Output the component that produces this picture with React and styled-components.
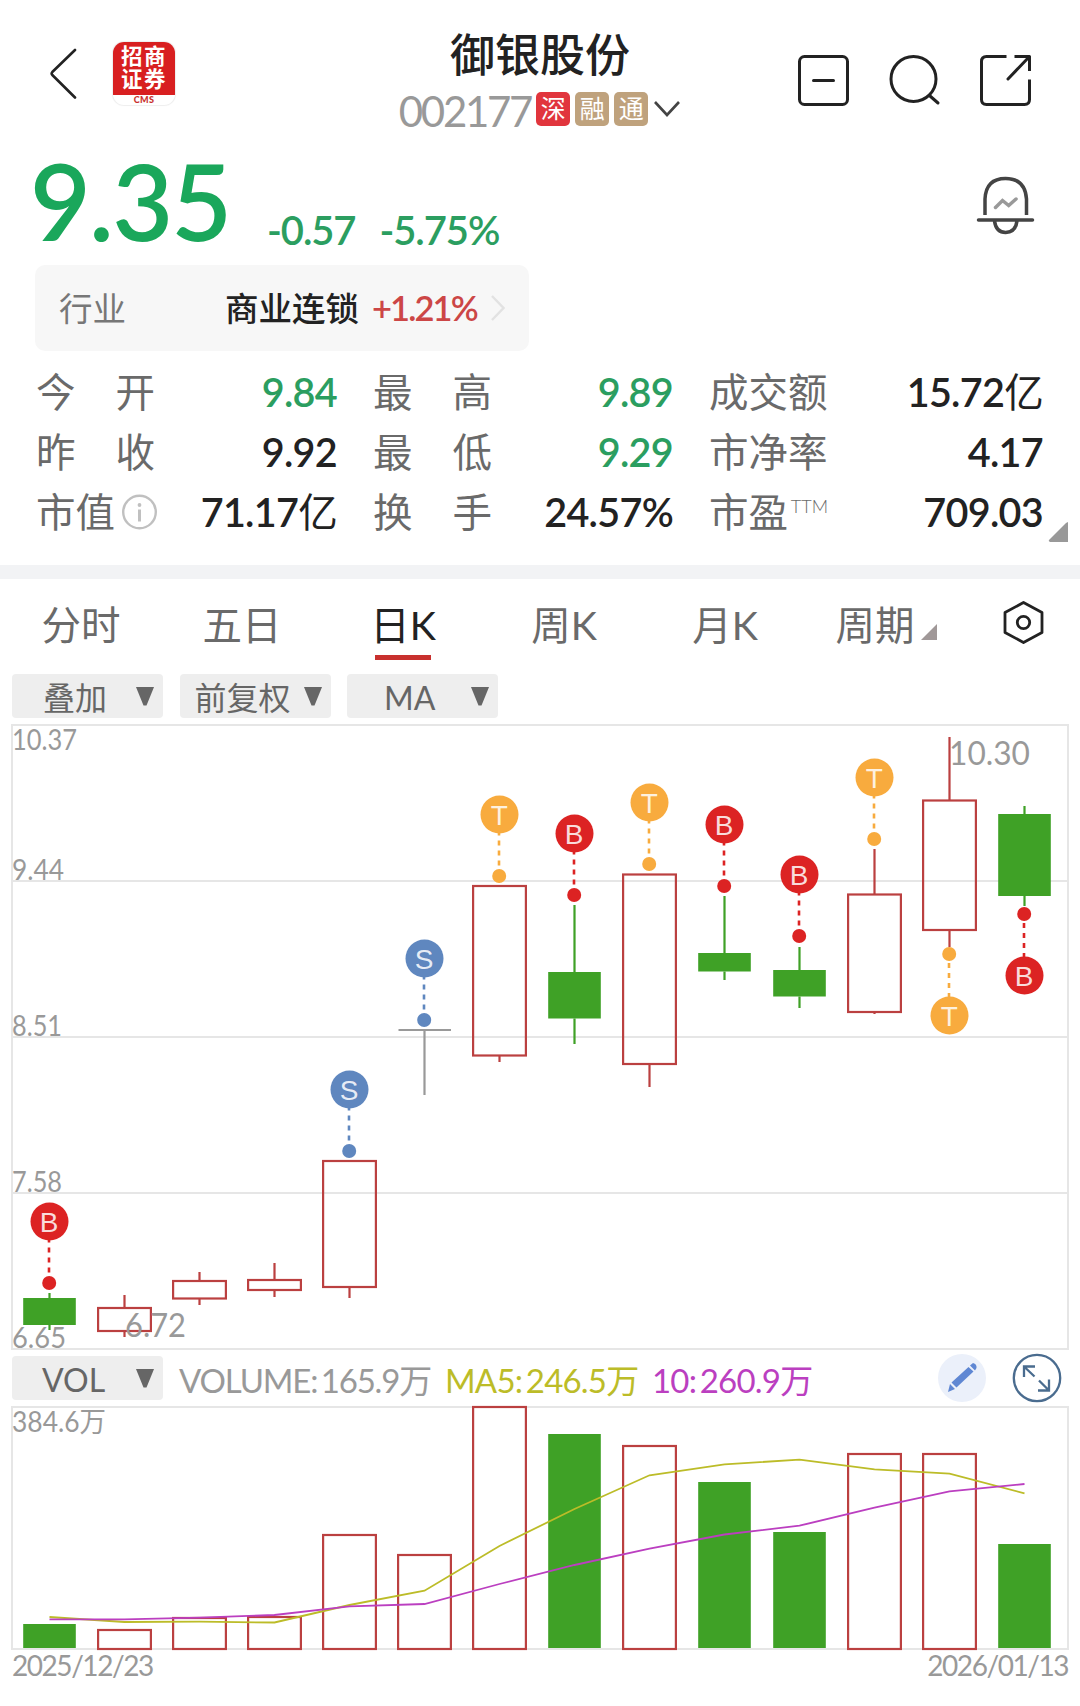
import styled, {createGlobalStyle} from "styled-components";

const GlobalStyle = createGlobalStyle`
  body {
    margin: 0;
    background-color: #fff;
  }
`;

const Container = styled.div`
  width: 1080px;
  height: 1706px;
  overflow: hidden;
  background-color: #fff;
  color: #222;
  font-family: Lato, "Noto Sans CJK SC", sans-serif;
`;

const Header = styled.div`
  height: 140px;
  display: grid;
  grid-template-columns: 1fr 360px 1fr;
`;

const HeaderLeft = styled.div`
  display: flex;
  align-items: flex-start;
  gap: 36px;
  padding: 42px 0 0 49px;
`;

const BackIcon = styled.svg`
  width: 28px;
  height: 52px;
  margin-top: 5px;
`;

const Broker = styled.div`
  width: 62px;
  height: 63px;
  box-sizing: border-box;
  border-radius: 11px;
  overflow: hidden;
  background-color: #fff;
  box-shadow: 0 0 1px 1px #eee;
`;

const BrokerName = styled.div`
  height: 52.5px;
  box-sizing: border-box;
  padding-top: 3px;
  background-color: #d81f20;
  color: #fff;
  font-size: 21.5px;
  font-weight: 700;
  line-height: 23px;
  letter-spacing: 1.5px;
  text-align: center;
`;

const BrokerCode = styled.div`
  color: #c8302e;
  font-size: 9px;
  font-weight: 900;
  line-height: 9px;
  letter-spacing: 0.4px;
  text-align: center;
`;

const HeaderCenter = styled.div`
  display: flex;
  flex-direction: column;
  align-items: center;
`;

const Title = styled.h1`
  margin: 29.5px 0 0;
  font-size: 45px;
  font-weight: 500;
  line-height: 50px;
`;

const CodeRow = styled.div`
  display: flex;
  align-items: center;
  gap: 5px;
  margin-top: 9px;
  height: 44px;
`;

const Code = styled.span`
  color: #999;
  font-size: 42px;
  line-height: 44px;
  letter-spacing: -2.3px;
`;

const Tag = styled.span`
  width: 34px;
  height: 34px;
  margin-top: -3px;
  border-radius: 5px;
  background-color: ${props => props.$color};
  color: #fff;
  font-size: 25px;
  line-height: 33px;
  text-align: center;
`;

const DownIcon = styled.svg`
  width: 28px;
  height: 18px;
  margin-top: -4px;
`;

const HeaderRight = styled.div`
  display: flex;
  justify-content: flex-end;
  align-items: flex-start;
  gap: 38px;
  padding: 54px 48px 0 0;
`;

const HeaderIcon = styled.svg`
  width: 53px;
  height: 53px;
  fill: none;
  stroke: #222;
  stroke-width: 3;
  stroke-linecap: round;
  stroke-linejoin: round;
`;

const PriceRow = styled.div`
  height: 125px;
  display: flex;
  align-items: flex-start;
`;

const Price = styled.div`
  width: 237px;
  padding: 8px 0 0 30px;
  color: #1aa75b;
  font-size: 105px;
  font-weight: 600;
  line-height: 105px;
  letter-spacing: -1.8px;
`;

const Change = styled.div`
  display: flex;
  gap: 24px;
  padding-top: 69.5px;
  color: #2b9e60;
  font-size: 40px;
  font-weight: 600;
  line-height: 40px;
  letter-spacing: -1.1px;
`;

const BellIcon = styled.svg`
  width: 60px;
  height: 62px;
  margin: 35px 45px 0 auto;
  fill: none;
  stroke: #444;
  stroke-width: 3.5;
  stroke-linecap: round;
`;

const Industry = styled.div`
  width: 494px;
  height: 86px;
  box-sizing: border-box;
  display: flex;
  align-items: center;
  margin-left: 35px;
  padding: 0 24px;
  border-radius: 10px;
  background-color: #f7f7f7;
  font-size: 33.5px;
  line-height: 40px;
`;

const IndustryLabel = styled.span`
  width: 166px;
  color: #777;
`;

const IndustryName = styled.span`
  font-weight: 500;
`;

const IndustryChange = styled.span`
  margin: 0 auto 0 13px;
  color: #cc4646;
  font-size: 34.5px;
  font-weight: 600;
  letter-spacing: -1.9px;
`;

const Stats = styled.div`
  position: relative;
  height: 214px;
  box-sizing: border-box;
  display: grid;
  grid-template-columns: 301px 300px 334px;
  grid-auto-rows: 60px;
  column-gap: 36px;
  padding: 11px 36px 0 36px;
`;

const Stat = styled.div`
  display: flex;
  justify-content: space-between;
  align-items: center;
  font-size: 39.5px;
  line-height: 60px;
`;

const StatLabel = styled.div`
  min-width: 119px;
  display: flex;
  justify-content: space-between;
  align-items: center;
  color: #6a6a6a;
`;

const Small = styled.span`
  align-self: flex-start;
  margin-left: -3px;
  font-size: 18px;
  font-weight: 300;
  line-height: 48px;
`;

const InfoIcon = styled.svg`
  width: 36px;
  height: 36px;
  margin-right: -2.5px;
`;

const StatValue = styled.div`
  color: ${props => props.$green ? "#2b9e60" : "#222"};
  font-weight: 600;
  letter-spacing: -0.7px;
  span {
    font-weight: 400;
  }
`;

const Corner = styled.svg`
  position: absolute;
  right: 12px;
  bottom: 23px;
  width: 20px;
  height: 20px;
`;

const Divider = styled.div`
  height: 14px;
  background-color: #f2f3f5;
`;

const Tabs = styled.div`
  height: 95px;
  display: flex;
`;

const Tab = styled.div`
  width: 161px;
  height: 81px;
  box-sizing: border-box;
  position: relative;
  display: flex;
  justify-content: center;
  padding: 15.5px 0 0 1px;
  color: ${props => props.$active ? "#222" : "#6a6a6a"};
  font-size: 39.5px;
  line-height: 60px;
  &::after {
    content: "";
    display: ${props => props.$active ? "block" : "none"};
    position: absolute;
    left: 53px;
    bottom: 0;
    width: 56px;
    height: 5px;
    background-color: #c8302e;
  }
`;

const TabCorner = styled.svg`
  width: 16px;
  height: 16px;
  margin: 29px 0 0 6px;
`;

const SettingIcon = styled.svg`
  width: 44px;
  height: 48px;
  margin: 20px 0 0 35px;
  fill: none;
  stroke: #222;
  stroke-width: 2.8;
  stroke-linejoin: round;
`;

const Filters = styled.div`
  height: 44px;
  display: flex;
  gap: 16.5px;
  padding-left: 12px;
`;

const Select = styled.div`
  width: 151px;
  height: 44px;
  box-sizing: border-box;
  display: flex;
  align-items: center;
  justify-content: space-between;
  padding-right: 9px;
  border-radius: 4px;
  background-color: #eee;
  color: #666;
  font-size: 32px;
  line-height: 44px;
`;

const SelectText = styled.span`
  flex: 1;
  padding: 3px 0 0 ${props => props.$left}px;
`;

const Chart = styled.svg`
  display: block;
  width: 1080px;
  height: ${props => props.$height}px;
  font-family: Lato, "Noto Sans CJK SC", sans-serif;
`;

const VolumeBar = styled.div`
  height: 53px;
  box-sizing: border-box;
  display: flex;
  align-items: flex-start;
  padding: 3px 18px 0 12px;
`;

const Legend = styled.span`
  margin-left: ${props => props.$gap}px;
  width: ${props => props.$width}px;
  white-space: nowrap;
  color: ${props => props.$color};
  font-size: 33px;
  line-height: 48px;
  letter-spacing: ${props => props.$spacing}px;
  word-spacing: -4px;
`;

const VolumeIcon = styled.svg`
  width: 50px;
  height: 50px;
  margin: -3px 0 0 ${props => props.$gap};
`;

const Dates = styled.div`
  display: flex;
  justify-content: space-between;
  padding: 0 12px;
  color: #999;
  font-size: 28px;
  line-height: 24px;
  letter-spacing: -1.45px;
`;

const RED = "#bb4040";
const GREEN = "#3fa126";
const GRAY = "#999";

const MARKS = {B: "#dc2323", T: "#f8ab3e", S: "#5f87bf"};

// y values in page pixels: wick top, body top, body bottom, wick bottom
const candles = [
    {up: false, y: [1293, 1298, 1325, 1330], mark: "B", dot: 1283, volume: 1624},
    {up: true, y: [1295, 1308, 1331, 1337], volume: 1630},
    {up: true, y: [1272, 1281, 1298.5, 1305], volume: 1618},
    {up: true, y: [1263, 1280, 1290, 1297], volume: 1617},
    {up: true, y: [1161, 1161, 1287, 1298], mark: "S", dot: 1151, volume: 1535},
    {flat: true, up: true, y: [1030, 1030, 1030, 1095], mark: "S", dot: 1020, volume: 1555},
    {up: true, y: [886, 886, 1055.5, 1062], mark: "T", dot: 876, volume: 1407},
    {up: false, y: [905, 972, 1018.5, 1044], mark: "B", dot: 895, volume: 1434},
    {up: true, y: [874.5, 874.5, 1064, 1087], mark: "T", dot: 864, volume: 1446},
    {up: false, y: [896, 953, 971.5, 980], mark: "B", dot: 886, volume: 1482},
    {up: false, y: [947, 970, 996.5, 1008], mark: "B", dot: 936, volume: 1532},
    {up: true, y: [849, 894.5, 1012, 1014], mark: "T", dot: 839, volume: 1454},
    {up: true, y: [737, 800.5, 930, 947], mark: "T", dot: 954, below: true, volume: 1454},
    {up: false, y: [806, 814, 896, 906], mark: "B", dot: 914, below: true, volume: 1544},
];

const ma5 = [1617, 1622, 1621.7, 1622.5, 1605, 1590.7, 1546, 1509, 1475.3, 1464.3, 1459.7, 1469.3, 1473.7, 1493.3];
const ma10 = [1619.3, 1619.3, 1617.7, 1615, 1606.3, 1604, 1584, 1565, 1548.7, 1534.5, 1525.7, 1507.7, 1491.3, 1484];

const stats = [
    {label: ["今", "开"], value: "9.84", green: true},
    {label: ["最", "高"], value: "9.89", green: true},
    {label: ["成交额"], value: "15.72", unit: "亿"},
    {label: ["昨", "收"], value: "9.92"},
    {label: ["最", "低"], value: "9.29", green: true},
    {label: ["市净率"], value: "4.17"},
    {label: ["市值"], value: "71.17", unit: "亿", info: true},
    {label: ["换", "手"], value: "24.57%"},
    {label: ["市盈"], value: "709.03", small: "TTM"},
];

const centerX = (i) => 49.5 + i * 75;
const linePoints = (values) => values.map((y, i) => `${centerX(i)},${y}`).join(" ");

const Candle = ({x, up, flat, y}) => {
    const [high, top, bottom, low] = y;
    if (flat) return (
        <g stroke={GRAY} strokeWidth="2.2">
            <path d={`M${x - 26} ${top}h52.5M${x} ${top}V${low}`}/>
        </g>
    )
    const color = up ? RED : GREEN
    return (
        <g stroke={color} strokeWidth="2.2">
            <path d={`M${x} ${high}V${top}M${x} ${bottom}V${low}`}/>
            {up
                ? <rect x={x - 26.4} y={top} width="52.8" height={bottom - top} fill="none"/>
                : <rect x={x - 26.3} y={top} width="52.6" height={bottom - top} fill={color} stroke="none"/>}
        </g>
    )
}

const Mark = ({x, type, dot, below}) => {
    const color = MARKS[type]
    const cy = below ? dot + 61.5 : dot - 61.5
    return (
        <g>
            <path d={below ? `M${x - 0.5} ${dot + 9}V${cy - 18}` : `M${x - 0.5} ${cy + 18}V${dot - 7}`}
                  stroke={color} strokeWidth="2.6" strokeDasharray="5 5" strokeDashoffset={below ? 0 : 2}/>
            <circle cx={x - 0.3} cy={dot} r="7" fill={color}/>
            <circle cx={x} cy={cy} r="19" fill={color}/>
            <text x={x - 0.3} y={cy + 10} fill="#fff" fillOpacity="0.85" fontSize="28" textAnchor="middle"
                  fontFamily="'Liberation Sans', sans-serif">{type}</text>
        </g>
    )
}

const Label = ({x, y, width, size = 28, children}) => (
    <text x={x} y={y} fontSize={size} fill={GRAY} textLength={width} lengthAdjust="spacingAndGlyphs">
        {children}
    </text>
)

const Arrow = () => (
    <svg width="18" height="19" viewBox="0 0 18 19">
        <path d="M0 0H18L10.5 18.5H7.5Z" fill="#666"/>
    </svg>
)

const PriceChart = () => (
    <Chart $height={635} viewBox="0 718 1080 635">
        <path d="M12 725H1068V1349H12ZM12 881H1068M12 1037H1068M12 1193H1068"
              fill="none" stroke="#e6e6e6" strokeWidth="2"/>
        {candles.map((item, i) => <Candle key={i} x={centerX(i)} {...item}/>)}
        {candles.map((item, i) => item.mark &&
            <Mark key={i} x={centerX(i)} type={item.mark} dot={item.dot} below={item.below}/>)}
        <Label x={12} y={749.5} width={65}>10.37</Label>
        <Label x={12} y={879.5} width={52}>9.44</Label>
        <Label x={12} y={1035.5} width={50}>8.51</Label>
        <Label x={12} y={1191.5} width={50}>7.58</Label>
        <Label x={12} y={1347.5} width={54}>6.65</Label>
        <Label x={949} y={764.5} width={81} size={33}>10.30</Label>
        <Label x={125} y={1337} width={61} size={33}>6.72</Label>
    </Chart>
)

const VolumeChart = () => (
    <Chart $height={247} viewBox="0 1406 1080 247" overflow="visible">
        <path d="M12 1407H1068V1649H12Z" fill="none" stroke="#e6e6e6" strokeWidth="2"/>
        {candles.map((item, i) => item.up
            ? <rect key={i} x={centerX(i) - 26.4} y={item.volume} width="52.8" height={1649 - item.volume}
                    fill="none" stroke={RED} strokeWidth="2.2"/>
            : <rect key={i} x={centerX(i) - 26.3} y={item.volume} width="52.6" height={1648 - item.volume}
                    fill={GREEN}/>)}
        <polyline points={linePoints(ma5)} fill="none" stroke="#bcbc28" strokeWidth="1.8"/>
        <polyline points={linePoints(ma10)} fill="none" stroke="#bb3fc0" strokeWidth="1.8"/>
        <Label x={12} y={1431.5} width={94}>384.6万</Label>
    </Chart>
)

export default function App() {
    return (
        <Container>
            <GlobalStyle/>
            <Header>
                <HeaderLeft>
                    <BackIcon viewBox="0 0 28 52" fill="none" stroke="#222" strokeWidth="2.6"
                              strokeLinecap="round" strokeLinejoin="round">
                        <path d="M26 3L3.3 25Q2 26.5 3.3 28L26 50.5"/>
                    </BackIcon>
                    <Broker>
                        <BrokerName>招商<br/>证券</BrokerName>
                        <BrokerCode>CMS</BrokerCode>
                    </Broker>
                </HeaderLeft>
                <HeaderCenter>
                    <Title>御银股份</Title>
                    <CodeRow>
                        <Code>002177</Code>
                        <Tag $color="#e1353d">深</Tag>
                        <Tag $color="#bfa27d">融</Tag>
                        <Tag $color="#bfa27d">通</Tag>
                        <DownIcon viewBox="0 0 28 18" fill="none" stroke="#444" strokeWidth="2.6">
                            <path d="M2 2L14 15L26 2"/>
                        </DownIcon>
                    </CodeRow>
                </HeaderCenter>
                <HeaderRight>
                    <HeaderIcon viewBox="0 0 53 53">
                        <rect x="2.5" y="2.5" width="48" height="48" rx="5"/>
                        <path d="M16.5 26.5H36.5"/>
                    </HeaderIcon>
                    <HeaderIcon viewBox="0 0 53 53">
                        <circle cx="25.5" cy="25" r="22.5"/>
                        <path d="M42 42L50 49"/>
                    </HeaderIcon>
                    <HeaderIcon viewBox="0 0 53 53">
                        <path d="M27.5 2.5H7.5Q2.5 2.5 2.5 7.5V45.5Q2.5 50.5 7.5 50.5H45.5Q50.5 50.5 50.5 45.5V25.5M35.500 2.5H50.5V17"
                              strokeLinecap="butt"/>
                        <path d="M29 25L50 3"/>
                    </HeaderIcon>
                </HeaderRight>
            </Header>
            <PriceRow>
                <Price>9.35</Price>
                <Change>
                    <span>-0.57</span>
                    <span>-5.75%</span>
                </Change>
                <BellIcon viewBox="975 175 60 62">
                    <path d="M985 215V199Q986 178.500 1005.500 178.500Q1025 178.500 1026.500 199V215" strokeLinecap="butt"/>
                    <path d="M978.500 220H1032.500M994.500 221Q996 232.500 1005.700 232.500Q1015.500 232.500 1017 221"/>
                    <path d="M995.500 207.500L1002.500 200.500L1008.700 205.500L1016 199" stroke="#999"/>
                </BellIcon>
            </PriceRow>
            <Industry>
                <IndustryLabel>行业</IndustryLabel>
                <IndustryName>商业连锁</IndustryName>
                <IndustryChange>+1.21%</IndustryChange>
                <svg width="14" height="26" fill="none" stroke="#e2e2e2" strokeWidth="2.4">
                    <path d="M1 1L12.500 13L1 25"/>
                </svg>
            </Industry>
            <Stats>
                {stats.map(item => (
                    <Stat key={item.value}>
                        <StatLabel>
                            {item.label.map(text => <span key={text}>{text}</span>)}
                            {item.info && (
                                <InfoIcon viewBox="0 0 36 36" fill="none" stroke="#c0c0c0" strokeWidth="2.4">
                                    <circle cx="17.500" cy="18" r="16.300"/>
                                    <path d="M17.500 15.500V27.500" strokeWidth="3"/>
                                    <circle cx="17.500" cy="11" r="1.900" fill="#c0c0c0" stroke="none"/>
                                </InfoIcon>
                            )}
                            {item.small && <Small>{item.small}</Small>}
                        </StatLabel>
                        <StatValue $green={item.green}>{item.value}{item.unit && <span>{item.unit}</span>}</StatValue>
                    </Stat>
                ))}
                <Corner viewBox="0 0 20 20"><path d="M20 0V20H2Q0 19 1 18L18 1Z" fill="#999"/></Corner>
            </Stats>
            <Divider/>
            <Tabs>
                <Tab>分时</Tab>
                <Tab>五日</Tab>
                <Tab $active>日K</Tab>
                <Tab>周K</Tab>
                <Tab>月K</Tab>
                <Tab>
                    周期
                    <TabCorner viewBox="0 0 16 16"><path d="M16 0V16H0Z" fill="#a09898"/></TabCorner>
                </Tab>
                <SettingIcon viewBox="0 0 44 48">
                    <path d="M22.500 3.500L41 13.500V33.500L22.500 43.500L4 33.500V13.500Z"/>
                    <circle cx="22.500" cy="23.500" r="6.200"/>
                </SettingIcon>
            </Tabs>
            <Filters>
                <Select><SelectText $left={31}>叠加</SelectText><Arrow/></Select>
                <Select><SelectText $left={15}>前复权</SelectText><Arrow/></Select>
                <Select><SelectText $left={37}>MA</SelectText><Arrow/></Select>
            </Filters>
            <PriceChart/>
            <VolumeBar>
                <Select><SelectText $left={30}>VOL</SelectText><Arrow/></Select>
                <Legend $gap={16} $width={256} $color="#999" $spacing={-1.15}>VOLUME: 165.9万</Legend>
                <Legend $gap={10} $width={196} $color="#bcbc28" $spacing={-0.8}>MA5: 246.5万</Legend>
                <Legend $gap={11} $width={165} $color="#bb3fc0" $spacing={-0.8}>10: 260.9万</Legend>
                <VolumeIcon $gap="auto" viewBox="0 0 50 50">
                    <circle cx="25" cy="25" r="24" fill="#ebf0fa"/>
                    <path d="M11 39L13 31L18 36ZM14.500 29.500L31.500 14L36.500 18.500L19.500 34.500ZM33 12.500L36 10Q40 11 39.500 15L38 17.500Z"
                          fill="#5f87d3"/>
                </VolumeIcon>
                <VolumeIcon $gap="25px" viewBox="0 0 50 50" fill="none" stroke="#4a6c8f" strokeWidth="2.300">
                    <circle cx="25" cy="25" r="23.200"/>
                    <path d="M23 13.500H12V24M12 13.500L22.500 23.500M37 26.500V37.500H26M37 37.500L27 27.500"/>
                </VolumeIcon>
            </VolumeBar>
            <VolumeChart/>
            <Dates>
                <span>2025/12/23</span>
                <span>2026/01/13</span>
            </Dates>
        </Container>
    )
}
